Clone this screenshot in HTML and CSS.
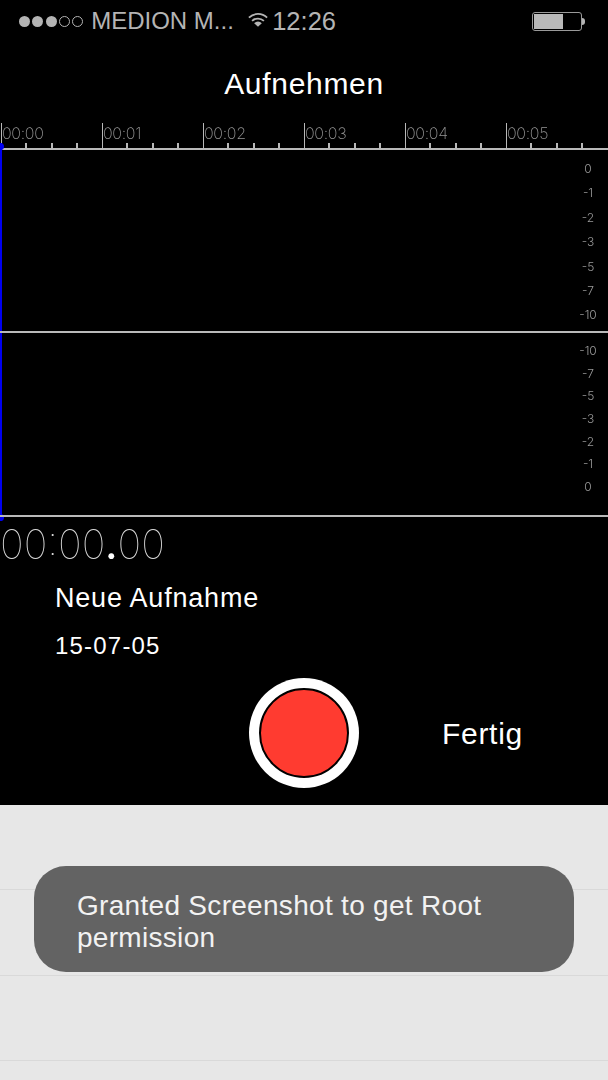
FILE: index.html
```html
<!DOCTYPE html>
<html lang="de">

<head>
	<meta charset="UTF-8">
	<title>Aufnehmen</title>
	<link rel="stylesheet" href="styles.css">
</head>

<body>

	<div class="recorder">
		<div class="statusBar">
			<div class="signal">
				<span class="dot"></span><span class="dot"></span><span class="dot"></span><span class="dot empty"></span><span class="dot empty"></span>
			</div>
			<span class="carrier">MEDION M...</span>
			<svg class="wifi" width="20" height="16" viewBox="0 0 22 16">
				<path d="M1 5.500 A14 14 0 0 1 21 5.500" fill="none" stroke="#b4b4b4" stroke-width="2" />
				<path d="M4.500 9 A9.500 9.500 0 0 1 17.500 9" fill="none" stroke="#b4b4b4" stroke-width="2" />
				<path d="M11 15.500 L6.800 11.500 A6 6 0 0 1 15.200 11.500 Z" fill="#b4b4b4" />
			</svg>
			<span class="clock">12:26</span>
			<div class="battery">
				<div class="batteryShell">
					<div class="batteryLevel"></div>
				</div>
				<div class="batteryTip"></div>
			</div>
		</div>

		<h1 class="title">Aufnehmen</h1>

		<div class="ruler">
			<div class="second"><span>00:00</span></div>
			<div class="second"><span>00:01</span></div>
			<div class="second"><span>00:02</span></div>
			<div class="second"><span>00:03</span></div>
			<div class="second"><span>00:04</span></div>
			<div class="second"><span>00:05</span></div>
		</div>

		<div class="waves">
			<div class="playhead"></div>
			<div class="track">
				<span>0</span><span>-1</span><span>-2</span><span>-3</span><span>-5</span><span>-7</span><span>-10</span>
			</div>
			<div class="track lower">
				<span>-10</span><span>-7</span><span>-5</span><span>-3</span><span>-2</span><span>-1</span><span>0</span>
			</div>
		</div>

		<div class="timer">00:00<b>.</b>00</div>
		<div class="recordName">Neue Aufnahme</div>
		<div class="recordDate">15-07-05</div>

		<div class="controls">
			<button class="recordBtn"><span></span></button>
			<button class="doneBtn">Fertig</button>
		</div>
	</div>

	<div class="list">
		<div class="listRow"></div>
		<div class="listRow"></div>
		<div class="listRow"></div>
		<div class="toast">Granted Screenshot to get Root permission</div>
	</div>

</body>

</html>
```

FILE: styles.css
```css
* {
	margin: 0;
	padding: 0;
	box-sizing: border-box;
}

body {
	font-family: 'Liberation Sans', Arial, sans-serif;
	height: 1080px;
	overflow: hidden;
	background-color: #e7e7e7;
	color: #fff;
}

.recorder {
	height: 805px;
	background-color: #000;
}

/* status bar */
.statusBar {
	display: flex;
	align-items: center;
	height: 42px;
	padding-left: 19px;
	color: #b4b4b4;
}

.signal {
	display: flex;
	gap: 2.300px;
	margin-right: 8px;
}

.dot {
	width: 11px;
	height: 11px;
	border-radius: 50%;
	background-color: #b4b4b4;
}

.dot.empty {
	background-color: transparent;
	border: 1px solid #b4b4b4;
}

.carrier {
	font-size: 24px;
	width: 157px;
	white-space: nowrap;
}

.wifi {
	margin-right: 4px;
	margin-top: -3px;
}

.clock {
	font-size: 25.500px;
	width: 260px;
}

.battery {
	display: flex;
	align-items: center;
}

.batteryShell {
	width: 50px;
	height: 19px;
	padding: 1px;
	border: 1px solid #9a9a9a;
	border-radius: 3px;
}

.batteryLevel {
	width: 29px;
	height: 100%;
	background-color: #b9b9b9;
}

.batteryTip {
	width: 3px;
	height: 7px;
	border-radius: 0 3px 3px 0;
	background-color: #b4b4b4;
}

/* title */
.title {
	height: 78px;
	padding-top: 25px;
	font-size: 30px;
	line-height: 34px;
	letter-spacing: 0.7px;
	font-weight: normal;
	text-align: center;
}

/* time ruler */
.ruler {
	display: flex;
	height: 30px;
	padding: 3px 0 0 1px;
	border-bottom: 2px solid #b9b9b9;
	font-family: Inter, sans-serif;
	font-weight: 200;
	font-size: 16px;
	color: #969696;
	will-change: opacity;
}

.second {
	flex: 0 0 101px;
	height: 25px;
	padding-left: 1px;
	line-height: 20px;
	letter-spacing: -0.3px;
	background-image:
		linear-gradient(#b9b9b9, #b9b9b9),
		linear-gradient(#b9b9b9, #b9b9b9),
		linear-gradient(#b9b9b9, #b9b9b9),
		linear-gradient(#b9b9b9, #b9b9b9);
	background-repeat: no-repeat;
	background-size: 1px 100%, 2px 5px, 2px 5px, 2px 5px;
	background-position: 0 0, 24px 100%, 50px 100%, 75px 100%;
}

/* meters */
.waves {
	position: relative;
}

.playhead {
	position: absolute;
	left: 0;
	top: -7px;
	bottom: -4px;
	width: 2px;
	background-color: #0000f0;
}

.playhead::before,
.playhead::after {
	content: "";
	position: absolute;
	left: -3px;
	width: 7px;
	height: 7px;
	border-radius: 50%;
	background-color: #0000f0;
}

.playhead::before {
	top: 0;
}

.playhead::after {
	bottom: 0;
}

.track {
	display: flex;
	flex-direction: column;
	align-items: center;
	width: 100%;
	height: 183px;
	padding: 7px 0 0 568px;
	border-bottom: 2px solid #b9b9b9;
	font-family: Inter, sans-serif;
	font-weight: 300;
	font-size: 12px;
	color: #9a9a9a;
	will-change: opacity;
}

.track span {
	height: 24.400px;
	line-height: 24.400px;
}

.track.lower {
	height: 184px;
	padding-top: 7px;
}

.track.lower span {
	height: 22.700px;
	line-height: 22.700px;
}

/* timer and record info */
.timer {
	height: 56px;
	padding-top: 5px;
	font-family: Inter, sans-serif;
	font-weight: 100;
	font-size: 40px;
	line-height: 46px;
	color: #d8d8d8;
	will-change: opacity;
}

.timer b {
	font-weight: 500;
	color: #fff;
}

.recordName {
	height: 48px;
	padding-left: 55px;
	font-size: 27px;
	line-height: 50px;
	letter-spacing: 0.8px;
}

.recordDate {
	height: 50px;
	padding-left: 55px;
	font-size: 24px;
	line-height: 50px;
	letter-spacing: 1.2px;
}

/* bottom buttons */
.controls {
	display: flex;
	align-items: center;
	height: 110px;
	padding-left: 249px;
	margin-top: 7px;
}

.recordBtn {
	display: flex;
	align-items: center;
	justify-content: center;
	width: 110px;
	height: 110px;
	border: none;
	border-radius: 50%;
	background-color: #fff;
}

.recordBtn span {
	width: 90px;
	height: 90px;
	border: 2px solid #000;
	border-radius: 50%;
	background-color: #ff3b30;
}

.doneBtn {
	margin: 2px 0 0 83px;
	border: none;
	background: none;
	font-family: inherit;
	font-size: 30px;
	letter-spacing: 0.7px;
	color: #fff;
}

/* list behind the toast */
.list {
	position: relative;
	height: 275px;
}

.listRow {
	height: 85.330px;
	border-bottom: 1px solid #d9d9d9;
}

.toast {
	position: absolute;
	left: 34px;
	top: 61px;
	width: 540px;
	height: 106px;
	padding: 24px 43px 0;
	border-radius: 32px;
	background-color: #636363;
	font-size: 28px;
	line-height: 32px;
	letter-spacing: 0.3px;
	color: #f2f2f2;
}
```
